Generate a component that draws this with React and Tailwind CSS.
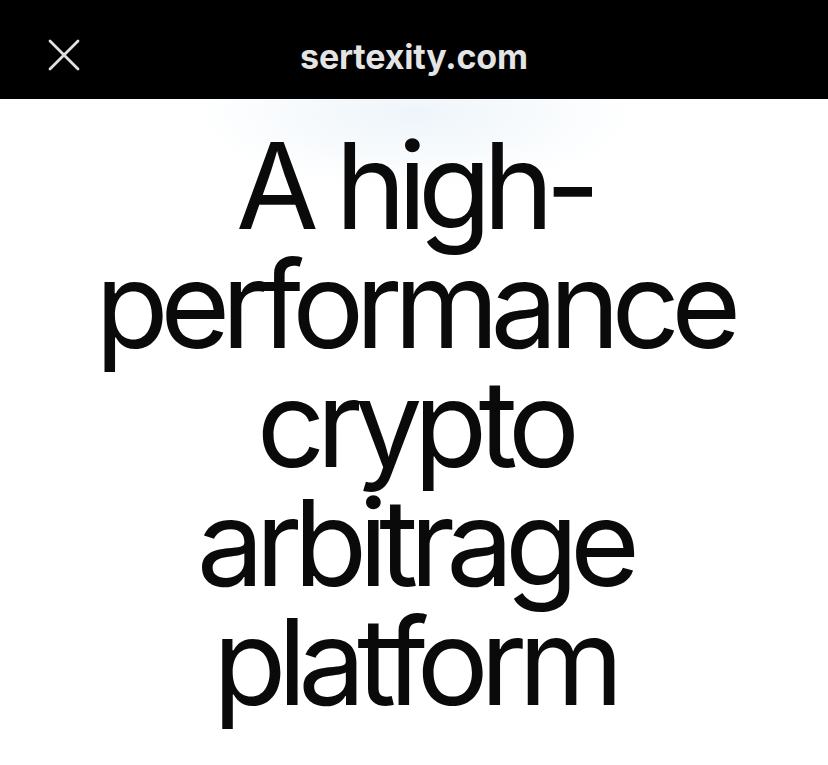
const lines = ['A high-', 'performance', 'crypto', 'arbitrage', 'platform'];

export default function App() {
  return (
    <div className="min-h-[765px] w-full bg-white font-['Inter',sans-serif]">
      {/* Browser-style top bar */}
      <header className="relative flex h-[99px] items-center justify-center bg-black">
        <button className="absolute left-[48px] top-[39px] text-[#e2e2e2]">
          <svg width="32" height="32" viewBox="0 0 32 32" fill="none" stroke="currentColor" strokeWidth="2.8" strokeLinecap="round">
            <path d="M2 2 L30 30 M30 2 L2 30" />
          </svg>
        </button>
        <span className="pt-[14px] text-[34px] font-bold tracking-[-0.005em] text-[#e4e4e4]">
          sertexity.com
        </span>
      </header>

      {/* Hero */}
      <main className="bg-[radial-gradient(ellipse_220px_75px_at_50%_15px,#eef5fa,#ffffff)] pt-[27px]">
        <h1 className="text-center text-[120px] font-normal leading-[119px] tracking-[-0.072em] text-[#0a0a0a]">
          {lines.map((l) => (
            <div key={l}>{l}</div>
          ))}
        </h1>
      </main>
    </div>
  );
}
